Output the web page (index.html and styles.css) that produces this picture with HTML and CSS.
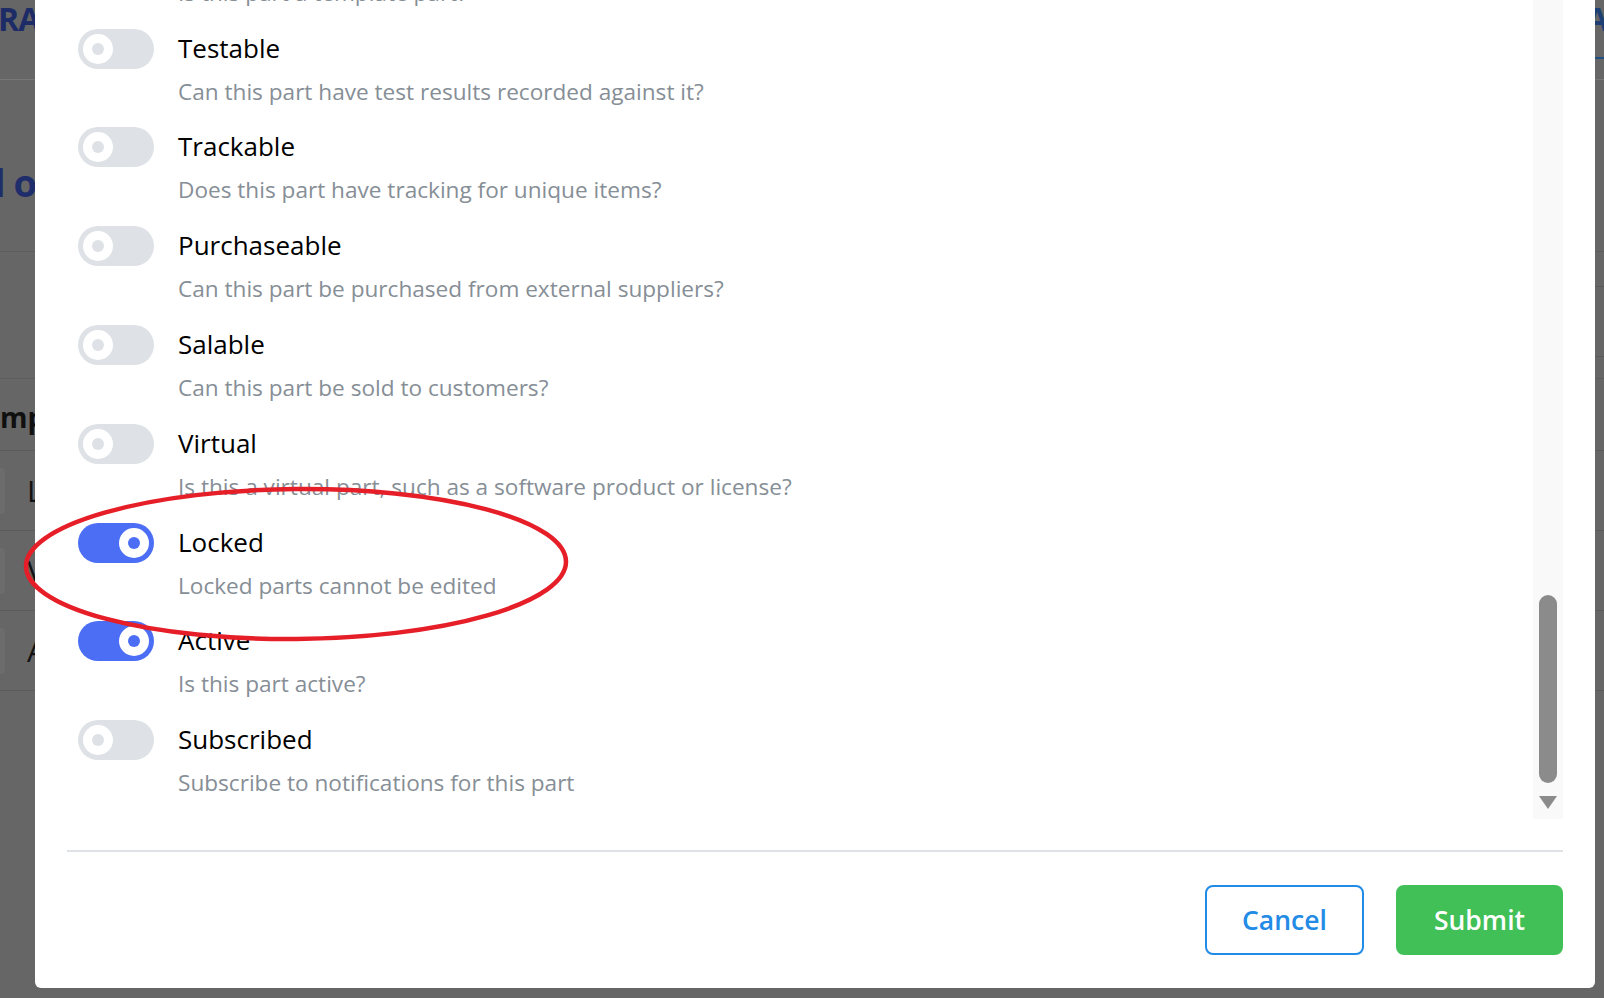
FILE: index.html
```html
<!DOCTYPE html>
<html lang="en">
<head>
<meta charset="utf-8">
<title>Edit Part</title>
<link rel="stylesheet" href="styles.css">
</head>
<body>
<div class="page">
  <header class="topbar">
    <div class="brand">RA</div>
    <div class="tab"><span class="tab-glyph">A</span></div>
  </header>
  <section class="titlebar"><h1 class="title">l o</h1></section>
  <section class="panel"><div class="panel-side"></div></section>
  <section class="table">
    <div class="thead">mp</div>
    <div class="trow"><span class="cellbox"></span><span class="cell">L</span></div>
    <div class="trow"><span class="cellbox"></span><span class="cell">V</span></div>
    <div class="trow"><span class="cellbox"></span><span class="cell">A</span></div>
  </section>
</div>

<div class="modal">
  <div class="scroll">
    <div class="list">
      <div class="row">
        <span class="toggle"><span class="knob"><span class="dot"></span></span></span>
        <div class="label">Template</div>
        <div class="desc">Is this part a template part?</div>
      </div>
      <div class="row">
        <span class="toggle"><span class="knob"><span class="dot"></span></span></span>
        <div class="label">Testable</div>
        <div class="desc">Can this part have test results recorded against it?</div>
      </div>
      <div class="row">
        <span class="toggle"><span class="knob"><span class="dot"></span></span></span>
        <div class="label">Trackable</div>
        <div class="desc">Does this part have tracking for unique items?</div>
      </div>
      <div class="row">
        <span class="toggle"><span class="knob"><span class="dot"></span></span></span>
        <div class="label">Purchaseable</div>
        <div class="desc">Can this part be purchased from external suppliers?</div>
      </div>
      <div class="row">
        <span class="toggle"><span class="knob"><span class="dot"></span></span></span>
        <div class="label">Salable</div>
        <div class="desc">Can this part be sold to customers?</div>
      </div>
      <div class="row">
        <span class="toggle"><span class="knob"><span class="dot"></span></span></span>
        <div class="label">Virtual</div>
        <div class="desc">Is this a virtual part, such as a software product or license?</div>
      </div>
      <div class="row">
        <span class="toggle on"><span class="knob"><span class="dot"></span></span></span>
        <div class="label">Locked</div>
        <div class="desc">Locked parts cannot be edited</div>
      </div>
      <div class="row">
        <span class="toggle on"><span class="knob"><span class="dot"></span></span></span>
        <div class="label">Active</div>
        <div class="desc">Is this part active?</div>
      </div>
      <div class="row">
        <span class="toggle"><span class="knob"><span class="dot"></span></span></span>
        <div class="label">Subscribed</div>
        <div class="desc">Subscribe to notifications for this part</div>
      </div>
    </div>
    <div class="scrollbar">
      <div class="thumb"></div>
      <div class="arrow"></div>
    </div>
  </div>
  <div class="divider"></div>
  <div class="actions">
    <button class="btn cancel" type="button">Cancel</button>
    <button class="btn submit" type="button">Submit</button>
  </div>
</div>

<svg class="annotation" width="1604" height="998" viewBox="0 0 1604 998" aria-hidden="true">
  <ellipse cx="296" cy="564" rx="270" ry="75" transform="rotate(-0.5 296 564)" fill="none" stroke="#e61e28" stroke-width="4.5"/>
</svg>
</body>
</html>
```

FILE: styles.css
```css
html, body {
  margin: 0;
  padding: 0;
}
body {
  width: 1604px;
  height: 998px;
  overflow: hidden;
  background: #666666;
  font-family: "Open Sans", "Noto Sans", sans-serif;
}

/* ---------- dimmed page behind the modal ---------- */
.page {
  display: flex;
  flex-direction: column;
  width: 1604px;
}
.topbar {
  height: 79px;
  border-bottom: 1px solid #767676;
  display: flex;
  justify-content: space-between;
  align-items: flex-start;
}
.brand {
  font-size: 32px;
  font-weight: 700;
  line-height: 38px;
  color: #1d2b66;
  margin-left: -2px;
  letter-spacing: -1px;
}
.tab {
  width: 22px;
  height: 57px;
  border-bottom: 2px solid #1e4f86;
  display: flex;
  justify-content: flex-end;
}
.tab-glyph {
  font-size: 32px;
  font-weight: 700;
  line-height: 38px;
  color: #1e3f74;
  margin-right: -4px;
}
.titlebar {
  height: 171px;
  border-bottom: 1px solid #5d5d5d;
}
.title {
  margin: 76px 0 0 -6px;
  font-size: 38px;
  font-weight: 700;
  line-height: 52px;
  color: #1f2d6a;
  word-spacing: -2px;
}
.panel {
  height: 126px;
  border-bottom: 1px solid #5d5d5d;
  display: flex;
  flex-direction: column;
  align-items: flex-end;
}
.panel-side {
  width: 40px;
  height: 69px;
  margin-top: 34px;
  border-top: 1px solid #5a5a5a;
  border-bottom: 1px solid #5a5a5a;
}
.table {
  display: flex;
  flex-direction: column;
}
.thead {
  height: 72px;
  border-bottom: 1px solid #5b5b5b;
  font-size: 28px;
  font-weight: 700;
  line-height: 40px;
  padding-top: 18px;
  box-sizing: border-box;
  color: #101010;
}
.trow {
  height: 79px;
  border-bottom: 1px solid #5b5b5b;
  display: flex;
  align-items: center;
  gap: 22px;
}
.cellbox {
  width: 5px;
  height: 46px;
  background: #6c6c6c;
  border-radius: 0 4px 4px 0;
}
.cell {
  font-size: 30px;
  line-height: 40px;
  color: #121212;
}

/* ---------- modal ---------- */
.modal {
  position: fixed;
  left: 35px;
  right: 9px;
  bottom: 10px;
  background: #ffffff;
  border-radius: 0 0 6px 6px;
  padding: 0 32px 33px;
  display: flex;
  flex-direction: column;
}
.scroll {
  display: flex;
}
.list {
  flex: 1;
  padding-left: 11px;
  display: flex;
  flex-direction: column;
}
.row {
  display: grid;
  grid-template-columns: 76px 1fr;
  column-gap: 24px;
  padding-bottom: 20.8px;
}
.toggle {
  grid-row: 1 / span 2;
  width: 76px;
  height: 40px;
  border-radius: 20px;
  background: #dee2e6;
  display: flex;
  align-items: center;
  padding: 0 5px;
  box-sizing: border-box;
}
.toggle.on {
  background: #4c6ef5;
  justify-content: flex-end;
}
.knob {
  width: 30px;
  height: 30px;
  border-radius: 50%;
  background: #ffffff;
  display: flex;
  align-items: center;
  justify-content: center;
}
.dot {
  width: 12px;
  height: 12px;
  border-radius: 50%;
  background: #dee2e6;
}
.toggle.on .dot {
  background: #4c6ef5;
}
.label {
  font-size: 26px;
  line-height: 40px;
  color: #000000;
  margin-top: -1px;
}
.desc {
  margin-top: 9px;
  font-size: 22.6px;
  line-height: 30px;
  color: #868e96;
}

/* fake native scrollbar */
.scrollbar {
  width: 30px;
  background: #f9f9f9;
  display: flex;
  flex-direction: column;
  justify-content: flex-end;
  align-items: center;
  padding-bottom: 10px;
  box-sizing: border-box;
}
.thumb {
  width: 18px;
  height: 188px;
  border-radius: 9px;
  background: #8b8b8b;
}
.arrow {
  margin-top: 13px;
  width: 0;
  height: 0;
  border-left: 9px solid transparent;
  border-right: 9px solid transparent;
  border-top: 13px solid #8b8b8b;
}

.divider {
  height: 2px;
  background: #dee2e6;
  margin: 31px 0 33px;
}
.actions {
  display: flex;
  justify-content: flex-end;
  gap: 32px;
}
.btn {
  height: 70px;
  border-radius: 8px;
  font-family: "Open Sans", "Noto Sans", sans-serif;
  font-size: 26.5px;
  font-weight: 600;
  padding: 0;
  cursor: pointer;
}
.cancel {
  width: 159px;
  background: #ffffff;
  color: #228be6;
  border: 2px solid #228be6;
}
.submit {
  width: 167px;
  background: #40c057;
  color: #ffffff;
  border: none;
}

/* red annotation drawn over the screenshot */
.annotation {
  position: fixed;
  left: 0;
  top: 0;
  pointer-events: none;
}
```
